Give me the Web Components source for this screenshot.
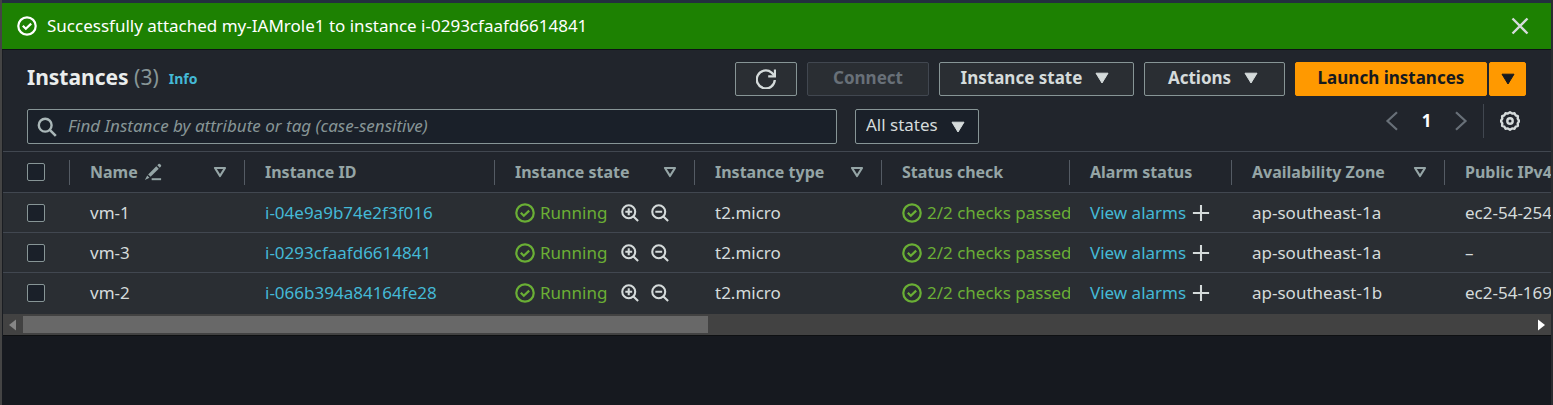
<!DOCTYPE html>
<html lang="en">
<head>
<meta charset="utf-8">
<title>Instances | EC2 Console</title>
<style>
  html { background: #16191f; }
  body {
    margin: 0; min-height: 100vh; box-sizing: border-box; color: #d5dbdb;
    font: 17px/24px "Noto Sans", "Open Sans", sans-serif;
    border-left: 2px solid #444444; border-right: 2px solid #2a2c30;
  }
</style>
</head>
<body>
<ec2-app></ec2-app>
<script>
const ICONS = {
  check: '<circle cx="10" cy="10" r="8.7" fill="none" stroke="currentColor" stroke-width="2.2"/><path d="M5.8 9.8l3 3 5.4-5.2" fill="none" stroke="currentColor" stroke-width="2.2"/>',
  close: '<path d="M2.5 2.5l15 15M17.5 2.5l-15 15" fill="none" stroke="currentColor" stroke-width="2.4"/>',
  search: '<circle cx="8.2" cy="8.2" r="6.4" fill="none" stroke="currentColor" stroke-width="2.4"/><path d="M12.8 12.8l6 6" stroke="currentColor" stroke-width="2.6"/>',
  refresh: '<path d="M18.8 11A9 9 0 1 1 15.6 3.6L18.6 6.6" fill="none" stroke="currentColor" stroke-width="2.3"/><path d="M19 .6V7.4H12.2" fill="none" stroke="currentColor" stroke-width="2.3"/>',
  caret: '<path d="M4 5.2h12l-6 9.8z" fill="currentColor" stroke="currentColor" stroke-width="1" stroke-linejoin="round"/>',
  sort: '<path d="M5 6h10l-5 8z" fill="none" stroke="currentColor" stroke-width="2.2" stroke-linejoin="round"/>',
  prev: '<path d="M15 1.2L5.5 10l9.5 8.8" fill="none" stroke="currentColor" stroke-width="2.2"/>',
  next: '<path d="M5 1.2L14.5 10 5 18.8" fill="none" stroke="currentColor" stroke-width="2.2"/>',
  gear: '<path d="M10 1.3l2.1 1.3 2.4-.4 1.1 2.1 2.3.9-.2 2.5 1.5 2.3-1.5 2.3.2 2.5-2.3.9-1.1 2.1-2.4-.4L10 18.7l-2.1-1.3-2.4.4-1.1-2.1-2.3-.9.2-2.5L.8 10l1.5-2.3-.2-2.5 2.3-.9L5.5 2.2l2.4.4z" fill="none" stroke="currentColor" stroke-width="2.4" stroke-linejoin="round"/><circle cx="10" cy="10" r="2.7" fill="none" stroke="currentColor" stroke-width="2.4"/>',
  edit: '<path d="M4.6 12.7L13.7 3.6l2.7 2.7L7.3 15.4z" fill="currentColor"/><path d="M14.8 2.5l1.3-1.3a1.2 1.2 0 0 1 1.7 0l1 1a1.2 1.2 0 0 1 0 1.7l-1.3 1.3zM3.6 13.9l2.5 2.5L1 19z" fill="currentColor"/><path d="M8.5 18h10.5" stroke="currentColor" stroke-width="2.2"/>',
  zoomin: '<circle cx="8.6" cy="8.6" r="7.2" fill="none" stroke="currentColor" stroke-width="2.3"/><path d="M13.8 13.8l5.2 5.2M8.6 4.8v7.6M4.8 8.6h7.6" stroke="currentColor" stroke-width="2.3"/>',
  zoomout: '<circle cx="8.6" cy="8.6" r="7.2" fill="none" stroke="currentColor" stroke-width="2.3"/><path d="M13.8 13.8l5.2 5.2M4.8 8.6h7.6" stroke="currentColor" stroke-width="2.3"/>',
  plus: '<path d="M10 1v18M1 10h18" stroke="currentColor" stroke-width="2.3"/>',
  left: '<path d="M13 4.5v11L6 10z" fill="currentColor"/>',
  right: '<path d="M7 4.5v11l7-5.5z" fill="currentColor"/>'
};

class UiIcon extends HTMLElement {
  connectedCallback() {
    if (this.shadowRoot) return;
    this.attachShadow({ mode: 'open' }).innerHTML = `
      <style>
        :host { display: inline-flex; flex: none; width: var(--size, 20px); height: var(--size, 20px); }
        svg { display: block; width: 100%; height: 100%; }
      </style>
      <svg viewBox="0 0 20 20" aria-hidden="true">${ICONS[this.getAttribute('name')]}</svg>`;
  }
}
customElements.define('ui-icon', UiIcon);

class UiButton extends HTMLElement {
  connectedCallback() {
    if (this.shadowRoot) return;
    const label = this.getAttribute('label');
    this.attachShadow({ mode: 'open' }).innerHTML = `
      <style>
        :host { display: block; flex: none; }
        button {
          box-sizing: border-box; height: 34px; padding: 0 0 2px; display: flex;
          align-items: center; justify-content: center; gap: 10px; width: 100%;
          font: bold 17px/24px "Noto Sans", "Open Sans", sans-serif; white-space: nowrap;
          color: #d5dbdb; background: #2a2e33; border: 1px solid #879596; border-radius: 2px;
        }
        :host([label]) button { padding: 0; }
        button:disabled { color: #687078; border-color: #414750; }
        :host([variant=primary]) button { color: #16191f; background: #ff9900; border-color: #ff9900; }
      </style>
      <button type="button" ${label ? `aria-label="${label}"` : ''} ${this.hasAttribute('disabled') ? 'disabled' : ''}><slot></slot></button>`;
  }
}
customElements.define('ui-button', UiButton);

class UiIconButton extends HTMLElement {
  connectedCallback() {
    if (this.shadowRoot) return;
    this.attachShadow({ mode: 'open' }).innerHTML = `
      <style>
        :host { display: inline-flex; flex: none; }
        button { display: flex; padding: 0; border: 0; background: none; color: inherit; }
      </style>
      <button type="button" aria-label="${this.getAttribute('label')}"><ui-icon name="${this.getAttribute('icon')}"></ui-icon></button>`;
  }
}
customElements.define('ui-icon-button', UiIconButton);

class FlashBar extends HTMLElement {
  connectedCallback() {
    if (this.shadowRoot) return;
    this.attachShadow({ mode: 'open' }).innerHTML = `
      <style>
        :host {
          display: flex; align-items: center; gap: 10px; padding: 11px 21px 11px 15px;
          background: #1d8102; color: #fff; border-bottom: 1px solid #0e1216;
        }
        .text { flex: 1; }
        ui-icon-button { color: #d5dbdb; }
      </style>
      <ui-icon name="check"></ui-icon>
      <div class="text" role="status"><slot></slot></div>
      <ui-icon-button icon="close" label="Dismiss"></ui-icon-button>`;
  }
}
customElements.define('flash-bar', FlashBar);

class InstancesHeader extends HTMLElement {
  connectedCallback() {
    if (this.shadowRoot) return;
    this.attachShadow({ mode: 'open' }).innerHTML = `
      <style>
        :host { display: flex; align-items: flex-start; padding: 12px 25px 0 24px; }
        h1 { margin: 0 10px 0 0; font-size: 21px; line-height: 30px; color: #eaeded; }
        h1 span { font-weight: 400; color: #879596; }
        a { flex: 1; font-size: 14px; font-weight: 700; line-height: 24px; color: #44b9d6; text-decoration: none; padding-top: 5px; }
        .actions { display: flex; gap: 10px; }
        .split { display: flex; gap: 2px; }
        .refresh { width: 62px; }
        .connect { width: 122px; }
        .state { width: 195px; }
        .act { width: 141px; }
        .launch { width: 192px; }
        .more { width: 37px; }
      </style>
      <h1>Instances <span>(3)</span></h1>
      <a href="#info">Info</a>
      <div class="actions">
        <ui-button class="refresh" label="Refresh"><ui-icon name="refresh"></ui-icon></ui-button>
        <ui-button class="connect" disabled>Connect</ui-button>
        <ui-button class="state">Instance state <ui-icon name="caret"></ui-icon></ui-button>
        <ui-button class="act">Actions <ui-icon name="caret"></ui-icon></ui-button>
        <div class="split">
          <ui-button class="launch" variant="primary">Launch instances</ui-button>
          <ui-button class="more" variant="primary" label="More launch options"><ui-icon name="caret"></ui-icon></ui-button>
        </div>
      </div>`;
  }
}
customElements.define('instances-header', InstancesHeader);

class InstancesFilter extends HTMLElement {
  connectedCallback() {
    if (this.shadowRoot) return;
    this.attachShadow({ mode: 'open' }).innerHTML = `
      <style>
        :host { display: flex; align-items: flex-start; padding: 7px 31px 7px 24px; }
        .find, .states { display: grid; align-items: center; margin-top: 6px; }
        .find > *, .states > * { grid-area: 1 / 1; }
        .find { flex: 0 1 810px; margin-right: 18px; color: #aab7b8; }
        ui-icon { pointer-events: none; }
        .find ui-icon { margin-left: 10px; }
        input, select {
          box-sizing: border-box; width: 100%; height: 35px; margin: 0; appearance: none;
          background: #1a2029; border: 1px solid #879596; border-radius: 2px; color: #d5dbdb;
          font: 17px/24px "Noto Sans", "Open Sans", sans-serif;
        }
        input { padding: 0 10px 2px 40px; }
        input::placeholder { color: #879596; font-style: italic; opacity: 1; }
        select { padding: 0 10px 3px; }
        .states { width: 124px; }
        .states ui-icon { justify-self: end; margin-right: 11px; }
        nav { display: flex; align-items: center; margin-left: auto; height: 36px; color: #687078; }
        nav button { width: 49px; padding: 0; border: 0; background: none; color: #fff; font: bold 17px/24px "Noto Sans", "Open Sans", sans-serif; }
        .prefs { margin-left: 12px; padding-left: 16px; height: 34px; align-items: center; border-left: 1px solid #414750; color: #d5dbdb; }
      </style>
      <div class="find">
        <input type="text" aria-label="Find Instance" placeholder="Find Instance by attribute or tag (case-sensitive)">
        <ui-icon name="search"></ui-icon>
      </div>
      <div class="states">
        <select aria-label="Instance states"><option>All states</option></select>
        <ui-icon name="caret"></ui-icon>
      </div>
      <nav aria-label="Pages">
        <ui-icon-button icon="prev" label="Previous page"></ui-icon-button>
        <button type="button" aria-current="page">1</button>
        <ui-icon-button icon="next" label="Next page"></ui-icon-button>
        <ui-icon-button class="prefs" icon="gear" label="Preferences"></ui-icon-button>
      </nav>`;
  }
}
customElements.define('instances-filter', InstancesFilter);

const ROWS = [
  ['vm-1', 'i-04e9a9b74e2f3f016', 'ap-southeast-1a', 'ec2-54-254'],
  ['vm-3', 'i-0293cfaafd6614841', 'ap-southeast-1a', '–'],
  ['vm-2', 'i-066b394a84164fe28', 'ap-southeast-1b', 'ec2-54-169']
];
const COLUMNS = [
  ['Name', 175, true, '<ui-icon class="edit" name="edit"></ui-icon>'],
  ['Instance ID', 250], ['Instance state', 200, true], ['Instance type', 187, true],
  ['Status check', 188], ['Alarm status', 162], ['Availability Zone', 213, true], ['Public IPv4', 128]
];

class InstancesTable extends HTMLElement {
  connectedCallback() {
    if (this.shadowRoot) return;
    this.attachShadow({ mode: 'open' }).innerHTML = `
      <style>
        :host { display: block; overflow: hidden; border-top: 1px solid #414750; }
        table { width: 1570px; table-layout: fixed; border-collapse: separate; border-spacing: 0; }
        th, td {
          box-sizing: border-box; height: 40px; padding: 0 0 0 20px; overflow: hidden;
          white-space: nowrap; text-align: left; vertical-align: middle; border-bottom: 1px solid #414750;
        }
        th { height: 41px; font-size: 16px; color: #95a5a6; background: linear-gradient(#545b64, #545b64) right center / 1px 25px no-repeat; }
        th:last-child { background: none; }
        td { background: #2a2e33; }
        tr:last-child td { height: 41px; border-bottom-color: #2a2e33; }
        .pick { padding-left: 24px; }
        .pick input {
          display: block; appearance: none; box-sizing: border-box; width: 18px; height: 18px;
          margin: 0; background: #1a2029; border: 1px solid #879596; border-radius: 2px;
        }
        .cell { display: flex; align-items: center; }
        .cell .edit { --size: 18px; margin-left: 6px; }
        .cell .sort { margin-left: auto; margin-right: 15px; }
        a { color: #44b9d6; text-decoration: none; }
        .ok { color: #6aaf35; display: flex; align-items: center; gap: 5px; }
        .zoom { --size: 18px; margin-left: 12px; }
        .ok + .zoom { margin-left: 14px; }
        .plus { --size: 18px; margin-left: 6px; }
      </style>
      <table>
        <colgroup><col style="width:67px">${COLUMNS.map(c => `<col style="width:${c[1]}px">`).join('')}</colgroup>
        <thead><tr>
          <th class="pick"><input type="checkbox" aria-label="Select all instances"></th>
          ${COLUMNS.map(([t, , sort, extra]) => `<th scope="col"><div class="cell"><span>${t}</span>${extra || ''}${sort ? '<ui-icon class="sort" name="sort"></ui-icon>' : ''}</div></th>`).join('')}
        </tr></thead>
        <tbody>${ROWS.map(([name, id, zone, dns]) => `<tr>
          <td class="pick"><input type="checkbox" aria-label="Select ${name}"></td>
          <td>${name}</td>
          <td><a href="#${id}">${id}</a></td>
          <td><div class="cell"><span class="ok"><ui-icon name="check"></ui-icon><span>Running</span></span><ui-icon-button class="zoom" icon="zoomin" label="Include this state"></ui-icon-button><ui-icon-button class="zoom" icon="zoomout" label="Exclude this state"></ui-icon-button></div></td>
          <td>t2.micro</td>
          <td><span class="ok"><ui-icon name="check"></ui-icon><span>2/2 checks passed</span></span></td>
          <td><div class="cell"><a href="#alarms">View alarms</a><ui-icon-button class="plus" icon="plus" label="Create alarm"></ui-icon-button></div></td>
          <td>${zone}</td>
          <td>${dns}</td>
        </tr>`).join('')}</tbody>
      </table>`;
  }
}
customElements.define('instances-table', InstancesTable);

class ScrollTrack extends HTMLElement {
  connectedCallback() {
    if (this.shadowRoot) return;
    this.attachShadow({ mode: 'open' }).innerHTML = `
      <style>
        :host { display: flex; align-items: center; height: 21px; background: #424242; border-bottom: 1px solid #0e1012; }
        .left { color: #868686; }
        .right { color: #fff; }
        .thumb { flex: 5; height: 17px; background: #686868; }
        .rest { flex: 6; }
      </style>
      <ui-icon-button class="left" icon="left" label="Scroll left"></ui-icon-button>
      <div class="thumb"></div><div class="rest"></div>
      <ui-icon-button class="right" icon="right" label="Scroll right"></ui-icon-button>`;
  }
}
customElements.define('scroll-track', ScrollTrack);

class Ec2App extends HTMLElement {
  connectedCallback() {
    if (this.shadowRoot) return;
    this.attachShadow({ mode: 'open' }).innerHTML = `
      <style>
        :host { display: block; border-top: 3px solid #232f3e; }
        main { background: #21252c; border-left: 1px solid #1a1d22; }
      </style>
      <flash-bar>Successfully attached my-IAMrole1 to instance i-0293cfaafd6614841</flash-bar>
      <main>
        <instances-header></instances-header>
        <instances-filter></instances-filter>
        <instances-table></instances-table>
        <scroll-track></scroll-track>
      </main>`;
  }
}
customElements.define('ec2-app', Ec2App);
</script>
</body>
</html>
